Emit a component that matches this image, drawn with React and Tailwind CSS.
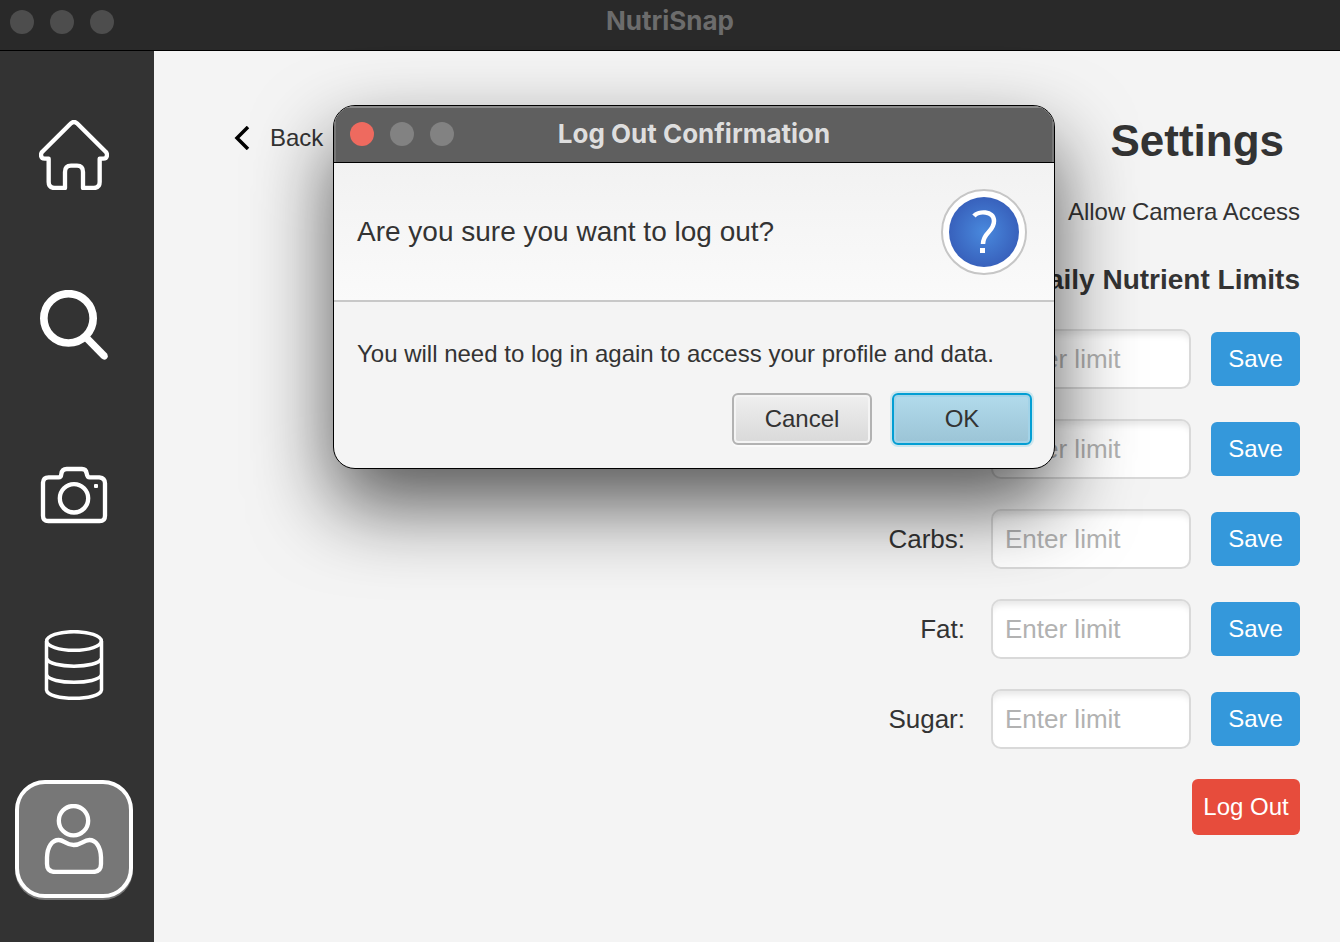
import React from "react";

const limits = ["Calories", "Protein", "Carbs", "Fat", "Sugar"];

function Icon({ viewBox, children }) {
  return (
    <svg
      viewBox={viewBox}
      className="size-[70px]"
      fill="none"
      stroke="white"
      strokeWidth="13"
      strokeLinejoin="round"
      aria-hidden="true"
    >
      {children}
    </svg>
  );
}

const navItems = [
  {
    label: "Home",
    icon: (
      <Icon viewBox="117 360 210 210">
        <path d="M195 564H164Q146 564 146 546V476H134Q123 476 123 464Q123 460 127 455L213 370Q222 362 231 370L317 455Q321 460 321 464Q321 476 310 476H299V546Q299 564 281 564H249V516Q249 497 231 497H213Q195 497 195 516Z" />
      </Icon>
    ),
  },
  {
    label: "Search",
    icon: (
      <Icon viewBox="117 60 210 210">
        <circle cx="205.500" cy="145" r="74" strokeWidth="23" />
        <path
          d="M254 214L304 265Q313 273 320 266Q327 259 320 250L270 199Z"
          fill="white"
          stroke="none"
        />
      </Icon>
    ),
  },
  {
    label: "Camera",
    icon: (
      <Icon viewBox="117 570 210 210">
        <path d="M146 622H176Q183 622 184 612Q186 597 200 597H246Q258 597 260 610Q262 622 269 622H298Q315 624 315 640V737Q315 753 299 753H145Q129 753 129 737V638Q130 622 146 622Z" />
        <circle cx="222" cy="685" r="42.500" />
        <rect x="282" y="642" width="12" height="12" rx="3" fill="white" stroke="none" />
      </Icon>
    ),
  },
  {
    label: "Database",
    icon: (
      <Icon viewBox="117 90 210 210">
        <g strokeWidth="10.500">
          <ellipse cx="222" cy="123" rx="82" ry="28" />
          <path d="M139.500 123V270C144 303 300 303 304.500 270V123" />
          <path d="M140 176C150 206 294 206 304 176M140 225C150 254 294 254 304 225" />
        </g>
      </Icon>
    ),
  },
  {
    label: "Profile",
    active: true,
    icon: (
      <Icon viewBox="117 612 210 210">
        <circle cx="220.500" cy="662" r="44" />
        <path d="M167 816Q141 816 141 792V772C142 740 156 720 176 720C192 720 198 735 221 735C244 735 250 720 268 720C288 720 302 740 303 772V792Q303 816 277 816Z" />
      </Icon>
    ),
  },
];

function Sidebar() {
  return (
    <nav className="flex w-[154px] shrink-0 flex-col gap-[60px] bg-[#333333] pt-[49px] pl-[15px]">
      {navItems.map(({ label, icon, active }) => (
        <button
          key={label}
          type="button"
          aria-label={label}
          className={
            active
              ? "flex size-[118px] shrink-0 items-center justify-center rounded-[30px] border-4 border-white bg-[#777777] shadow-[0_2px_0_#777777]"
              : "flex h-[110px] w-[118px] shrink-0 items-center justify-center"
          }
        >
          {icon}
        </button>
      ))}
    </nav>
  );
}

function Settings() {
  return (
    <main className="flex grow items-start justify-between bg-[#f4f4f4] pr-10 pl-20">
      <button type="button" className="mt-[71px] flex items-center gap-5 text-[24px] leading-8">
        <svg viewBox="0 0 16 24" className="h-6 w-4" fill="none" stroke="black" strokeWidth="3.500" aria-hidden="true">
          <path d="M14 1L3 12L14 23" />
        </svg>
        Back
      </button>
      <section className="flex flex-col items-end pt-[60px]">
        <h1 className="pr-4 text-[44px] leading-[60px] font-bold">Settings</h1>
        <label className="mt-[25px] flex items-center gap-4 text-[24px] leading-8">
          <input type="checkbox" className="size-6" />
          Allow Camera Access
        </label>
        <h2 className="mt-8 text-[28px] leading-10 font-bold">Daily Nutrient Limits</h2>
        <div className="mt-[29px] flex flex-col gap-[30px]">
          {limits.map((name) => (
            <div key={name} className="flex items-center justify-end">
              <label htmlFor={name} className="mr-[26px] text-[26px] leading-8">
                {name}:
              </label>
              <input
                id={name}
                type="text"
                placeholder="Enter limit"
                className="mr-5 h-[60px] w-[200px] rounded-[10px] border-2 border-[#d9d9d9] bg-white px-3 text-[26px] shadow-[inset_0_8px_6px_-4px_#e8e8e8] placeholder:text-[#b2b2b2]"
              />
              <button
                type="button"
                className="h-[54px] w-[89px] rounded-md bg-[#3498db] text-[24px] text-white"
              >
                Save
              </button>
            </div>
          ))}
        </div>
        <button
          type="button"
          className="mt-[30px] h-14 w-[108px] rounded-md bg-[#e74c3c] text-[24px] text-white"
        >
          Log Out
        </button>
      </section>
    </main>
  );
}

function LogOutDialog() {
  return (
    <section
      role="dialog"
      aria-labelledby="dialog-title"
      className="absolute top-[105px] left-[333px] w-[722px] overflow-hidden rounded-[22px] border border-black bg-[#f4f4f4] shadow-[0_36px_80px_rgba(0,0,0,0.65)]"
    >
      <header className="grid h-[57px] grid-cols-[1fr_auto_1fr] items-center border-b border-black bg-[#5f5f5f] px-4 shadow-[inset_0_2px_0_#8a8a8a,inset_2px_0_0_#777777,inset_-2px_0_0_#777777]">
        <div className="flex gap-4">
          <button type="button" aria-label="Close" className="size-6 rounded-full bg-[#ee6a5f]" />
          <button type="button" aria-label="Minimize" className="size-6 rounded-full bg-[#828282]" />
          <button type="button" aria-label="Zoom" className="size-6 rounded-full bg-[#828282]" />
        </div>
        <h2 id="dialog-title" className="font-['Inter',sans-serif] text-[26px] leading-8 font-bold text-[#dedede]">
          Log Out Confirmation
        </h2>
      </header>
      <div className="flex h-[139px] items-center justify-between border-b-2 border-[#c8c8c8] bg-linear-to-b from-[#f2f2f2] to-[#fafafa] pr-[27px] pl-[23px]">
        <p className="text-[28px] leading-9">Are you sure you want to log out?</p>
        <svg viewBox="0 0 86 86" className="size-[86px]" aria-hidden="true">
          <defs>
            <radialGradient id="question-fill">
              <stop offset="0" stopColor="#4989dd" />
              <stop offset="1" stopColor="#3861bc" />
            </radialGradient>
          </defs>
          <circle cx="43" cy="43" r="42" fill="white" stroke="#c6c6c6" strokeWidth="2" />
          <circle cx="43" cy="43" r="35" fill="url(#question-fill)" />
          <path
            d="M33 27C37 22 53 21 53 32C53 43 42 43 42 55"
            fill="none"
            stroke="white"
            strokeWidth="4.500"
          />
          <rect x="39" y="59" width="5" height="5" fill="white" />
        </svg>
      </div>
      <div className="pt-9 pr-[22px] pb-[23px] pl-[23px]">
        <p className="text-[24px] leading-8">You will need to log in again to access your profile and data.</p>
        <div className="mt-[23px] flex justify-end gap-5">
          <button
            type="button"
            className="h-[52px] w-[140px] rounded-md border-2 border-[#b2b2b2] bg-linear-to-b from-[#efefef] to-[#d9d9d9] text-[24px] shadow-[inset_0_0_0_2px_#f4f4f4,0_2px_0_#fafafa]"
          >
            Cancel
          </button>
          <button
            type="button"
            className="h-[52px] w-[140px] rounded-md border-2 border-[#039ed3] bg-linear-to-b from-[#b2dbec] to-[#9bc4d6] text-[24px] shadow-[0_0_0_2px_#cbe6ee,inset_0_0_0_2px_#a2d3e8]"
          >
            OK
          </button>
        </div>
      </div>
    </section>
  );
}

export default function App() {
  return (
    <div className="relative flex min-h-screen flex-col bg-[#333333] font-['Liberation_Sans',sans-serif] text-[#333333]">
      <header className="grid h-[51px] shrink-0 grid-cols-[1fr_auto_1fr] items-start border-b border-black bg-[#292929] px-[10px]">
        <div className="flex gap-4 pt-[10px]">
          <span className="size-6 rounded-full bg-[#4d4d4d]" />
          <span className="size-6 rounded-full bg-[#4d4d4d]" />
          <span className="size-6 rounded-full bg-[#4d4d4d]" />
        </div>
        <p className="pt-[5px] font-['Inter',sans-serif] text-[26px] leading-8 font-bold text-[#6c6c6c]">NutriSnap</p>
      </header>
      <div className="flex grow">
        <Sidebar />
        <Settings />
      </div>
      <LogOutDialog />
    </div>
  );
}
